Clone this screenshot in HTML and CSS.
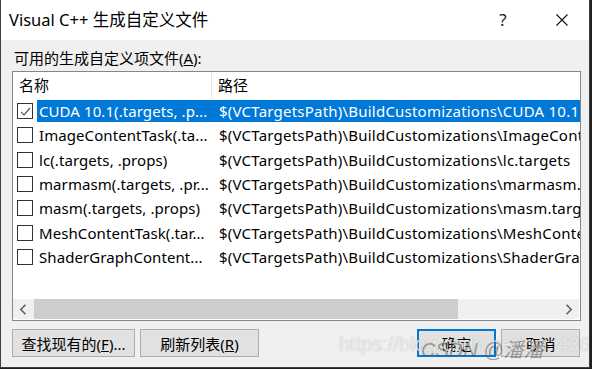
FILE: index.html
```html
<!DOCTYPE html>
<html lang="zh-CN">
<head>
    <meta charset="UTF-8">
    <title>Visual C++ 生成自定义文件</title>
    <link rel="stylesheet" href="styles.css">
</head>
<body>
    <div class="window">
        <div class="titlebar">
            <div class="title">Visual C++ 生成自定义文件</div>
            <div class="tb-btn help">?</div>
            <div class="tb-btn close">
                <svg width="12" height="12" viewBox="0 0 12 12"><path d="M0.5 0.5 L11.5 11.5 M11.5 0.5 L0.5 11.5" stroke="#111" stroke-width="1.1" fill="none"/></svg>
            </div>
        </div>
        <div class="content">
            <div class="label">可用的生成自定义项文件(<u>A</u>):</div>
            <div class="listbox">
                <div class="list-head">
                    <div class="col-name">名称</div>
                    <div class="col-path">路径</div>
                </div>
                <div class="rows" id="rows"></div>
                <div class="hscroll">
                    <div class="arrow">
                        <svg width="8" height="11" viewBox="0 0 8 11"><path d="M6.5 0.8 L1.8 5.5 L6.5 10.2" stroke="#606060" stroke-width="1.6" fill="none"/></svg>
                    </div>
                    <div class="track"><div class="thumb"></div></div>
                    <div class="arrow">
                        <svg width="8" height="11" viewBox="0 0 8 11"><path d="M1.5 0.8 L6.2 5.5 L1.5 10.2" stroke="#606060" stroke-width="1.6" fill="none"/></svg>
                    </div>
                </div>
            </div>
            <div class="buttons">
                <button class="btn btn-find">查找现有的(<u>F</u>)...</button>
                <button class="btn btn-refresh">刷新列表(<u>R</u>)</button>
                <div class="spacer"></div>
                <button class="btn btn-ok">确定</button>
                <button class="btn btn-cancel">取消</button>
            </div>
        </div>
        <div class="watermark">
            <span class="wm-url">https://blog.csdn.net/qq_43611</span>
            <span class="wm-name">CSDN @潘潘</span>
        </div>
    </div>

    <script>
        // 生成自定义文件列表
        const items = [
            { name: 'CUDA 10.1(.targets, .p...', path: 'CUDA 10.1.targets', checked: true },
            { name: 'ImageContentTask(.ta...', path: 'ImageContentTask.targets' },
            { name: 'lc(.targets, .props)', path: 'lc.targets' },
            { name: 'marmasm(.targets, .pr...', path: 'marmasm.targets' },
            { name: 'masm(.targets, .props)', path: 'masm.targets' },
            { name: 'MeshContentTask(.tar...', path: 'MeshContentTask.targets' },
            { name: 'ShaderGraphContent...', path: 'ShaderGraphContentTask.targets' }
        ];

        const rows = document.getElementById('rows');
        items.forEach((item, index) => {
            const row = document.createElement('div');
            row.className = 'row';
            row.innerHTML = `
                <div class="check">${item.checked ? '<svg width="13" height="13" viewBox="0 0 13 13"><path d="M2 6.8 L5 9.8 L11 3" stroke="#555" stroke-width="1.2" fill="none"/></svg>' : ''}</div>
                <div class="cells${index === 0 ? ' selected' : ''}">
                    <div class="cell-name">${item.name}</div>
                    <div class="cell-path">$(VCTargetsPath)\\BuildCustomizations\\${item.path}</div>
                </div>
            `;
            rows.appendChild(row);
        });
    </script>
</body>
</html>
```

FILE: styles.css
```css
body {
    margin: 0;
    background-color: #1f1f1f;
    font-family: "Noto Sans", "Noto Sans CJK SC", sans-serif;
    font-size: 15px;
    color: #000;
}
.window {
    position: relative;
    width: 590px;
    height: 368px;
    box-sizing: border-box;
    border: 1px solid #3f3f3f;
    border-top: none;
    background: #f0f0f0;
    overflow: hidden;
}
.titlebar {
    height: 40px;
    background: #fff;
    display: flex;
    align-items: center;
}
.title {
    flex: 1;
    padding-left: 8px;
    padding-bottom: 2px;
    font-size: 16.5px;
}
.tb-btn {
    width: 46px;
    height: 40px;
    display: flex;
    align-items: center;
    justify-content: center;
}
.help {
    font-size: 17px;
    color: #222;
    margin-right: 13px;
    padding-bottom: 2px;
}
.close {
    margin-right: 4px;
}
.content {
    padding: 0 8px 0 11px;
}
.label {
    margin-top: 9px;
    height: 18px;
    line-height: 18px;
    padding-left: 2px;
}
.listbox {
    margin-top: 4px;
    height: 250px;
    box-sizing: border-box;
    border: 1px solid #828790;
    background: #fff;
    display: flex;
    flex-direction: column;
}
.list-head {
    display: flex;
    height: 27px;
    flex-shrink: 0;
}
.col-name {
    width: 192px;
    padding-left: 6px;
    border-right: 1px solid #e5e5e5;
    line-height: 27px;
}
.col-path {
    padding-left: 6px;
    line-height: 27px;
}
.rows {
    flex: 1;
}
.row {
    height: 24.33px;
    display: flex;
    align-items: center;
    white-space: nowrap;
}
.check {
    width: 14px;
    height: 14px;
    border: 1px solid #333;
    margin-left: 4px;
    margin-right: 4px;
    display: flex;
    align-items: center;
    justify-content: center;
    flex-shrink: 0;
}
.cells {
    flex: 1;
    height: 22px;
    display: flex;
    align-items: center;
    overflow: hidden;
    min-width: 0;
}
.cells.selected {
    background: #0078d7;
    color: #fff;
}
.cell-name {
    width: 174px;
    padding-left: 2px;
    flex-shrink: 0;
    overflow: hidden;
    letter-spacing: 0.08px;
}
.cell-path {
    padding-left: 6px;
    white-space: nowrap;
    letter-spacing: 0.22px;
}
.hscroll {
    height: 20px;
    display: flex;
    background: #f0f0f0;
    flex-shrink: 0;
    margin-bottom: 1px;
    margin-right: 1px;
}
.arrow {
    width: 20px;
    display: flex;
    align-items: center;
    justify-content: center;
}
.track {
    flex: 1;
    padding: 0 1px;
}
.thumb {
    width: 424px;
    height: 100%;
    background: #cdcdcd;
}
.buttons {
    display: flex;
    margin-top: 8px;
    height: 28px;
}
.btn {
    height: 28px;
    box-sizing: border-box;
    border: 1px solid #adadad;
    background: #e1e1e1;
    font-family: "Noto Sans", "Noto Sans CJK SC", sans-serif;
    font-size: 15px;
    color: #000;
    padding: 0;
}
.btn-find {
    width: 123px;
    margin-right: 5px;
}
.btn-refresh {
    width: 119px;
}
.spacer {
    flex: 1;
}
.btn-ok {
    width: 79px;
    border: 2px solid #0078d7;
    margin-right: 5px;
}
.btn-cancel {
    width: 79px;
    margin-right: 1px;
}
.watermark {
    position: absolute;
    left: 338px;
    top: 333px;
    font-family: "Liberation Sans", "Noto Sans CJK SC", sans-serif;
    font-size: 20px;
    white-space: nowrap;
    pointer-events: none;
}
.wm-url {
    color: rgba(255, 255, 255, 0.75);
    text-shadow: 0 0 1px rgba(120, 120, 120, 0.6);
}
.wm-name {
    position: absolute;
    left: 82px;
    top: 1px;
    color: rgba(90, 90, 90, 0.55);
    font-style: italic;
}
```
